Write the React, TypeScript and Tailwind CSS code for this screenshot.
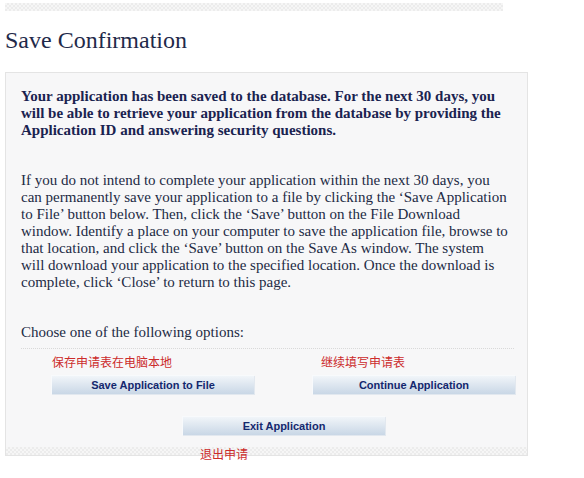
import React from "react";

const serif = { fontFamily: '"Liberation Serif", "Times New Roman", serif' };
const cjk = { fontFamily: '"Noto Sans CJK SC", sans-serif' };

function Btn({ label }: { label: string }) {
  return (
    <button
      className="shrink-0 w-[203px] h-[19px] bg-gradient-to-b from-[#f1f5f9] to-[#c9d7e6] border-t border-l border-[#f8fafc] text-[11px] font-bold text-[#14286e] leading-[17px] shadow-[1px_1px_0_#e2e8ef]"
      style={{ fontFamily: '"Liberation Sans", Arial, sans-serif' }}
    >
      {label}
    </button>
  );
}

export default function App() {
  return (
    <div className="w-[584px] h-[478px] bg-white px-[5px] pt-[3px]" style={serif}>
      <div className="w-[498px] h-[8px] bg-[repeating-conic-gradient(#ececec_0_25%,#f6f6f6_0_50%)] bg-[length:4px_4px]" />

      <h1 className="mt-[15px] text-[24px] leading-[28px] text-[#1f2a4a] font-normal">
        Save Confirmation
      </h1>

      <div className="relative mt-[18px] w-[523px] border border-[#e4e4e4] bg-[#f7f7f8]">
        <div className="pl-[15px] pr-[18px] pt-[15px]">
          <p className="text-[15px] leading-[17px] font-bold text-[#1a2350]">
            Your application has been saved to the database. For the next 30 days, you
            will be able to retrieve your application from the database by providing the
            Application ID and answering security questions.
          </p>

          <p className="mt-[33px] text-[15px] leading-[17px] text-[#222a44]">
            If you do not intend to complete your application within the next 30 days, you
            can permanently save your application to a file by clicking the ‘Save Application
            to File’ button below. Then, click the ‘Save’ button on the File Download
            window. Identify a place on your computer to save the application file, browse to
            that location, and click the ‘Save’ button on the Save As window. The system
            will download your application to the specified location. Once the download is
            complete, click ‘Close’ to return to this page.
          </p>

          <p className="mt-[33px] text-[15px] leading-[17px] text-[#222a44]">
            Choose one of the following options:
          </p>

          <div className="mt-[7px] w-[493px] border-t border-dotted border-[#d9d9d9]" />

          <div className="mt-[6px] flex h-[14px] text-[12px] leading-[14px] text-[#cc2b2b]" style={cjk}>
            <span className="shrink-0 ml-[31px]">保存申请表在电脑本地</span>
            <span className="shrink-0 ml-[149px]">继续填写申请表</span>
          </div>

          <div className="mt-[6px] flex pl-[30px] gap-[58px]">
            <Btn label="Save Application to File" />
            <Btn label="Continue Application" />
          </div>

          <div className="mt-[22px] flex pl-[161px]">
            <Btn label="Exit Application" />
          </div>
        </div>

        <div className="mt-[12px] h-[8px] bg-[repeating-conic-gradient(#ececec_0_25%,#f6f6f6_0_50%)] bg-[length:4px_4px]" />

        <span
          className="absolute left-[194px] top-[374px] text-[12px] leading-[14px] text-[#cc2b2b]"
          style={cjk}
        >
          退出申请
        </span>
      </div>
    </div>
  );
}
